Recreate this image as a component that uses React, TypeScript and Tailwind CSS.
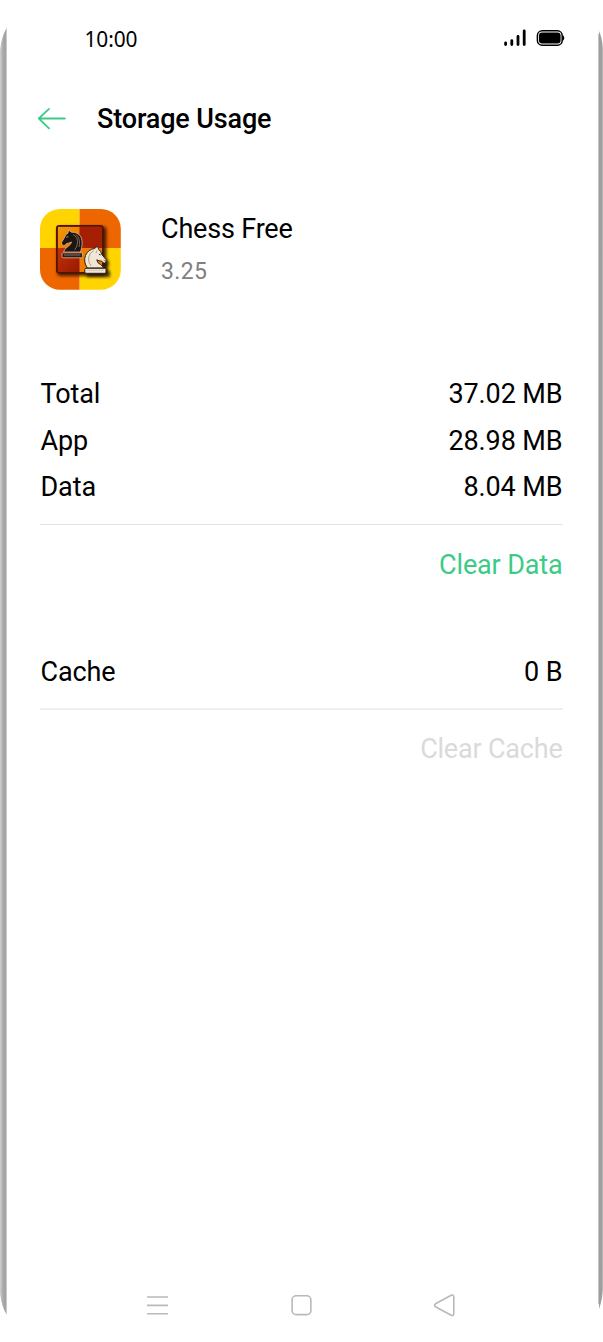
const USAGE = [
  { label: "Total", value: "37.02 MB" },
  { label: "App", value: "28.98 MB" },
  { label: "Data", value: "8.04 MB" },
];

function PhoneEdges() {
  return (
    <svg className="pointer-events-none absolute inset-0" width="603" height="1342" viewBox="0 0 603 1342" fill="none">
      <defs>
        <linearGradient id="edgeLeft" x1="0" y1="0" x2="7" y2="0" gradientUnits="userSpaceOnUse">
          <stop offset="0" stopColor="#d2d2d2" />
          <stop offset="0.3" stopColor="#b4b4b4" />
          <stop offset="0.7" stopColor="#a0a0a0" />
          <stop offset="0.85" stopColor="#aaaaaa" />
          <stop offset="1" stopColor="#e4e4e4" />
        </linearGradient>
        <linearGradient id="edgeRight" x1="598" y1="0" x2="603" y2="0" gradientUnits="userSpaceOnUse">
          <stop offset="0" stopColor="#c8c8c8" />
          <stop offset="0.3" stopColor="#9c9c9c" />
          <stop offset="0.7" stopColor="#a0a0a0" />
          <stop offset="1" stopColor="#c0c0c0" />
        </linearGradient>
      </defs>
      <path d="M6.5 28Q1.5 37 0 50V1294Q2 1308 7 1315V28Z" fill="url(#edgeLeft)" />
      <path d="M598.5 30Q602 37 603 48V1290Q602 1301 599 1309V30Z" fill="url(#edgeRight)" />
      <path d="M598.5 34V1304" stroke="#c4c4c4" />
    </svg>
  );
}

function StatusBar() {
  return (
    <header className="flex h-[80px] items-start justify-between pr-[38px] pl-[84.5px]">
      <span className="mt-[25px] font-['Noto_Sans',sans-serif] text-[20.9px] leading-[28px]">10:00</span>
      <div className="mt-[29px] flex items-center gap-[10px]">
        <svg width="23" height="18" viewBox="0 0 23 18" stroke="#000" strokeWidth="2.8" strokeLinecap="round">
          <path d="M2.6 13.8V15.6M8.8 11.6V15.6M15 7.3V15.6M21.2 2V15.6" />
        </svg>
        <svg width="29" height="18" viewBox="0 0 29 18" fill="none">
          <rect x="1.4" y="1.8" width="24.8" height="14.4" rx="4.8" stroke="#000" strokeWidth="1.5" />
          <rect x="3" y="3.5" width="21.6" height="11" rx="3" fill="#000" />
          <path d="M26.8 6Q29.8 9 26.8 12Z" fill="#000" />
        </svg>
      </div>
    </header>
  );
}

const BLACK_KNIGHT =
  "M23.5 43Q24.5 39.5 28 37.5Q31 35.5 31.5 33Q28.5 34.5 26.5 34.5Q25.5 37 23.5 36.5Q21.5 36 21.5 33.5L24.5 28.5Q25 25.5 28 24L28.5 21L31.5 23.2Q38 23 41 28Q43.5 34 40.5 43Z";
const WHITE_KNIGHT =
  "M47.5 59Q43 53 45.5 46.5Q48 40.5 54.5 39.5L57.5 37.2L58.8 40.5Q61 42 61.8 45.5L66 50.5Q66.8 53.5 64.5 54Q62.8 54.3 61.8 52.2Q59 52 56.8 50.8Q57 54 60.5 55.5Q63 57 63.5 59Z";

function AppIcon() {
  return (
    <svg className="h-[82px] w-[82px] shrink-0" viewBox="0 0 82 82">
      <defs>
        <clipPath id="tile">
          <rect x="0" y="0" width="80.8" height="80.8" rx="20" />
        </clipPath>
        <linearGradient id="topLeft" x1="0" y1="0" x2="1" y2="1">
          <stop offset="0" stopColor="#f39a00" />
          <stop offset="1" stopColor="#e87400" />
        </linearGradient>
        <linearGradient id="lowLeft" x1="0" y1="0" x2="1" y2="1">
          <stop offset="0" stopColor="#c53204" />
          <stop offset="1" stopColor="#951804" />
        </linearGradient>
        <filter id="soft" x="-20%" y="-20%" width="140%" height="140%">
          <feGaussianBlur stdDeviation="1.4" />
        </filter>
      </defs>
      <g clipPath="url(#tile)">
        <path d="M0 0H39.5V39H0ZM39.5 39H82V82H39.5Z" fill="#ffd400" />
        <path d="M39.5 0H82V39H39.5ZM0 39H39.5V82H0Z" fill="#ee6600" />
      </g>
      <rect x="17" y="17.5" width="49.5" height="49.5" rx="4" fill="#351000" opacity="0.85" filter="url(#soft)" />
      <path d="M46 62L60 50L68 51Q70 56 67 59L70 63V68H47Z" fill="#2a1600" opacity="0.85" filter="url(#soft)" />
      <rect x="16.8" y="16.8" width="46" height="47" rx="2.5" fill="#a51f04" stroke="#4a1705" strokeWidth="1.6" />
      <path d="M18 18H39.5V39H18Z" fill="url(#topLeft)" />
      <path d="M18 39H39.5V63H18Z" fill="url(#lowLeft)" />
      <path d="M39.5 39H62V63H39.5Z" fill="#ef7c00" />
      {/* Black knight, facing left */}
      <g stroke="#e3b596" strokeWidth="0.8" strokeLinejoin="round">
        <path d={BLACK_KNIGHT} fill="#1d1512" />
        <path d="M33 25.5Q38 28 37.5 34Q37 38.5 34.5 41M36 25.5Q41 30 39 38" fill="none" opacity="0.6" />
        <path d="M26.3 28.3L28.3 27.5" />
        <rect x="22" y="43.8" width="20.5" height="5" rx="1.2" fill="#2b1e19" />
        <path d="M24 46H40.5" stroke="#9b8375" />
      </g>
      {/* White knight, facing right */}
      <g stroke="#2d2118" strokeWidth="1" strokeLinejoin="round">
        <path d={WHITE_KNIGHT} fill="#f0e6d6" />
        <path d="M53.5 41.5Q49 44.5 48.5 49Q48.5 54 51 57M57 41.5L56 44" fill="none" stroke="#9d8d7a" strokeWidth="0.8" />
        <path d="M59 45.2L60.6 46M63.8 51.2L64.5 51.6" />
        <rect x="44.8" y="59.3" width="21.2" height="5" rx="1.2" fill="#f0e6d6" />
        <path d="M47 61.3H64" stroke="#c1b39f" strokeWidth="0.6" />
      </g>
    </svg>
  );
}

function UsageRow({ label, value }: { label: string; value: string }) {
  return (
    <div className="flex h-[46.5px] items-center justify-between pl-[0.5px]">
      <span>{label}</span>
      <span>{value}</span>
    </div>
  );
}

function NavBar() {
  return (
    <nav className="mt-auto mb-[23px] flex h-[28px] items-center pl-[146px]">
      <svg width="310" height="28" viewBox="0 0 310 28" fill="none" stroke="#b9b9b9" strokeWidth="1.6" strokeLinejoin="round">
        <path d="M1 6H22M1 14.4H22M1 22.8H22" />
        <rect x="146.1" y="4.8" width="18.8" height="18.8" rx="4.2" />
        <path d="M289.5 12.8L305.2 4.3Q307.7 3.4 307.8 6V22.5Q307.7 25.2 305.2 24.2L289.5 15.8Q287.6 14.3 289.5 12.8Z" />
      </svg>
    </nav>
  );
}

export default function App() {
  return (
    <div className="relative flex h-[1342px] w-[603px] flex-col overflow-hidden bg-white font-['Roboto',sans-serif] text-[27px] tracking-[-0.1px] text-black">
      <PhoneEdges />
      <StatusBar />

      <div className="flex h-[78px] items-center pl-[37px]">
        <svg width="29" height="24" viewBox="0 0 29 24" fill="none" stroke="#3ccb86" strokeWidth="1.8" strokeLinecap="round" strokeLinejoin="round">
          <path d="M27.8 11.5H1.8M12 1.9L1.8 11.5L12 21.3" />
        </svg>
        <h1 className="ml-[31px] text-[27px] font-medium tracking-[-0.15px]">Storage Usage</h1>
      </div>

      <section className="mt-[51px] flex h-[82px] pl-[40px]">
        <AppIcon />
        <div className="ml-[39px]">
          <h2 className="mt-[3px] leading-[34px] tracking-[-0.18px]">Chess Free</h2>
          <p className="mt-[11px] text-[23px] leading-[30px] tracking-[0.4px] text-[#808080]">3.25</p>
        </div>
      </section>

      <main className="mr-[40.5px] ml-[40px]">
        <section className="mt-[80px] border-b border-[#e3e3e3] pb-[13.5px]">
          {USAGE.map((row) => (
            <UsageRow key={row.label} {...row} />
          ))}
        </section>
        <div className="mt-[20px] flex justify-end">
          <button className="leading-[40px] tracking-[-0.15px] text-[#3ccb86]">Clear Data</button>
        </div>

        <section className="mt-[63.5px] border-b-2 border-[#efefef] pb-[13px]">
          <UsageRow label="Cache" value="0 B" />
        </section>
        <div className="mt-[19px] flex justify-end">
          <button className="leading-[40px] tracking-[-0.2px] text-[#dadada]">Clear Cache</button>
        </div>
      </main>

      <NavBar />
    </div>
  );
}
